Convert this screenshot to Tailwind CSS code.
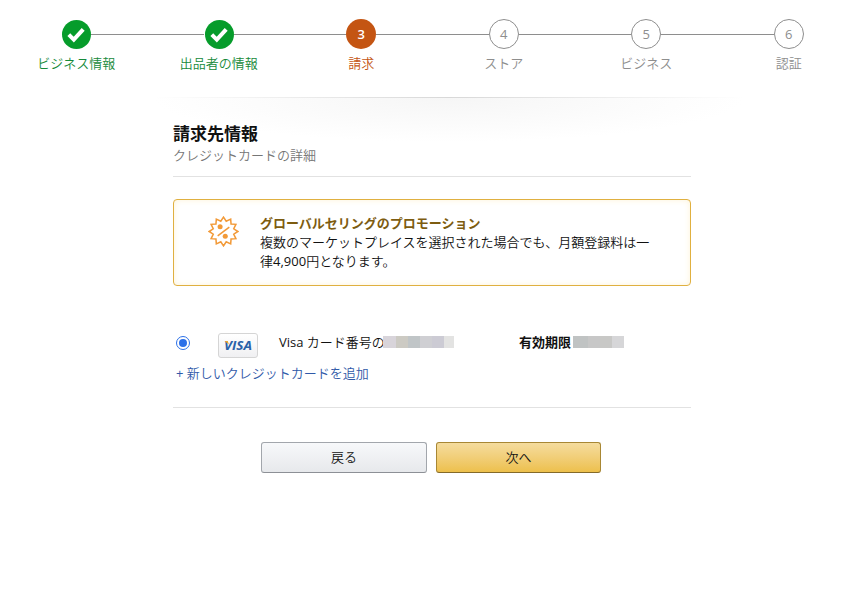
<!DOCTYPE html>
<html lang="ja">
<head>
  <meta charset="UTF-8">
  <meta name="viewport" content="width=device-width, initial-scale=1.0">
  <title>請求先情報</title>
  <script src="https://cdn.jsdelivr.net/npm/@tailwindcss/browser@4"></script>
  <style>
    body { font-family: "Open Sans", "Noto Sans CJK JP", sans-serif; }
  </style>
</head>
<body class="bg-white text-[#111] text-[13px] leading-[19px] font-[350] h-screen overflow-hidden">
  <!-- progress -->
  <ol class="grid grid-cols-6 w-[855px] ml-[5px] pt-[19px] h-[97px] text-center text-[#8e8e8e]">
    <li>
      <div class="flex items-center h-[30px]">
        <span class="flex-1"></span>
        <svg class="w-[29px] h-[29px]" viewBox="0 0 29 29"><circle cx="14.5" cy="14.5" r="14.5" fill="#069c2b"/><path d="M6.8 14.6l5 5L21.2 9.4" fill="none" stroke="#fff" stroke-width="4"/></svg>
        <span class="flex-1 h-px bg-[#8e8e8e]"></span>
      </div>
      <p class="mt-[5px] text-[#168a3a]">ビジネス情報</p>
    </li>
    <li>
      <div class="flex items-center h-[30px]">
        <span class="flex-1 h-px bg-[#8e8e8e]"></span>
        <svg class="w-[29px] h-[29px] ml-px" viewBox="0 0 29 29"><circle cx="14.5" cy="14.5" r="14.5" fill="#069c2b"/><path d="M6.8 14.6l5 5L21.2 9.4" fill="none" stroke="#fff" stroke-width="4"/></svg>
        <span class="flex-1 h-px bg-[#8e8e8e]"></span>
      </div>
      <p class="mt-[5px] text-[#168a3a]">出品者の情報</p>
    </li>
    <li>
      <div class="flex items-center h-[30px]">
        <span class="flex-1 h-px bg-[#8e8e8e]"></span>
        <span class="size-[30px] rounded-full bg-[#c45513] text-white font-semibold leading-[30px]">3</span>
        <span class="flex-1 h-px bg-[#8e8e8e]"></span>
      </div>
      <p class="mt-[5px] text-[#c45513]">請求</p>
    </li>
    <li>
      <div class="flex items-center h-[30px]">
        <span class="flex-1 h-px bg-[#8e8e8e]"></span>
        <span class="size-[30px] rounded-full border border-[#8e8e8e] leading-[29px] font-normal">4</span>
        <span class="flex-1 h-px bg-[#8e8e8e]"></span>
      </div>
      <p class="mt-[5px]">ストア</p>
    </li>
    <li>
      <div class="flex items-center h-[30px]">
        <span class="flex-1 h-px bg-[#8e8e8e]"></span>
        <span class="size-[30px] rounded-full border border-[#8e8e8e] leading-[29px] font-normal">5</span>
        <span class="flex-1 h-px bg-[#8e8e8e]"></span>
      </div>
      <p class="mt-[5px]">ビジネス</p>
    </li>
    <li>
      <div class="flex items-center h-[30px]">
        <span class="flex-1 h-px bg-[#8e8e8e]"></span>
        <span class="size-[30px] rounded-full border border-[#8e8e8e] leading-[29px] font-normal">6</span>
        <span class="flex-1"></span>
      </div>
      <p class="mt-[5px]">認証</p>
    </li>
  </ol>

  <div class="h-px w-[590px] ml-[154px] bg-linear-to-r from-white via-[#d8d8d8] to-white"></div>
  <main class="w-[590px] ml-[154px] px-[19px] pt-[25px] bg-[radial-gradient(295px_44px_at_50%_0,#f6f6f6,#fff)]">
    <h1 class="text-[17px] leading-[22px] font-bold">請求先情報</h1>
    <p class="text-[#767676] mt-px">クレジットカードの詳細</p>
    <hr class="w-[518px] mt-[11px] border-[#e2e2e2]">

    <section class="flex w-[518px] h-[87px] mt-[22px] pl-[34px] pt-[14px] rounded border border-[#e0b040] shadow-[inset_0_0_6px_#fdf3d8]">
      <svg class="w-[31px] h-[31px] mt-[2px] shrink-0" viewBox="0 0 32 32" fill="none" stroke="#f29a38" stroke-width="1.6">
        <path d="M16 1.2L18.8 5.4L23.4 3.2L23.8 8.2L28.8 8.6L26.6 13.2L30.8 16L26.6 18.8L28.8 23.4L23.8 23.8L23.4 28.8L18.8 26.6L16 30.8L13.2 26.6L8.6 28.8L8.2 23.8L3.2 23.4L5.4 18.8L1.2 16L5.4 13.2L3.2 8.6L8.2 8.2L8.6 3.2L13.2 5.4Z"/>
        <path d="M10 20.5L22 11.5"/>
        <circle cx="12.5" cy="11.2" r="2.6" fill="#f29a38" stroke="none"/>
        <circle cx="17.8" cy="21" r="2.6" fill="#f29a38" stroke="none"/>
      </svg>
      <div class="ml-[21px] w-[395px]">
        <h2 class="font-bold text-[#7d5c10]">グローバルセリングのプロモーション</h2>
        <p>複数のマーケットプレイスを選択された場合でも、月額登録料は一<br>律<span class="font-normal">4,900</span>円となります。</p>
      </div>
    </section>

    <div class="flex items-center w-[518px] h-[26px] mt-[46px]">
      <span class="size-[14px] ml-[3px] -mt-1 rounded-full border border-[#2b70e8] p-[2px] shrink-0"><span class="block size-full rounded-full bg-[#2b70e8]"></span></span>
      <span class="flex items-center justify-center w-10 h-[25px] ml-7 mt-px rounded-[3px] border border-[#d5d5d5] bg-linear-to-b from-white to-[#f0f0f2] text-[12px] font-bold italic">
        <svg class="w-[28px] h-[18px]" viewBox="0 0 28 18">
          <text x="0" y="13" textLength="28" lengthAdjust="spacingAndGlyphs" fill="#2a62a8">VISA</text>
          <path d="M0.5 4h3.2l1.3 3.6z" fill="#f0a526"/>
        </svg>
      </span>
      <span class="w-[104px] ml-[21px] -mt-[6px] whitespace-nowrap"><span class="font-normal">Visa</span> カード番号の</span>
      <span class="flex h-3 w-[71px] -mt-[6px]">
        <i class="w-[13px] bg-[#d8d4da]"></i><i class="w-3 bg-[#cccac3]"></i><i class="w-3 bg-[#c0c5c7]"></i><i class="w-3 bg-[#cfcfd3]"></i><i class="w-3 bg-[#cccbd4]"></i><i class="w-[10px] bg-[#e3e3e2]"></i>
      </span>
      <span class="w-[54px] ml-[65px] -mt-[6px] font-bold whitespace-nowrap">有効期限</span>
      <span class="flex h-3 w-[51px] -mt-[6px]">
        <i class="w-[15px] bg-[#c0c3c3]"></i><i class="w-3 bg-[#c7c7c7]"></i><i class="w-3 bg-[#c8c8c6]"></i><i class="w-3 bg-[#d6d6d8]"></i>
      </span>
    </div>
    <a href="#" class="block ml-[3px] mt-[6px] text-[#3059a8]"><span class="font-normal">+</span> 新しいクレジットカードを追加</a>
    <hr class="w-[518px] mt-[24px] border-[#e2e2e2]">

    <div class="flex gap-[9px] ml-[88px] mt-[34px]">
      <button class="w-[166px] h-[31px] rounded-[3px] border border-[#a2a6ac] border-b-[#8d9096] bg-linear-to-b from-[#f7f8fa] to-[#e7e9ec]">戻る</button>
      <button class="w-[165px] h-[31px] rounded-[3px] border border-[#a88734] border-b-[#846a29] bg-linear-to-b from-[#f5dc9d] to-[#edc04b]">次へ</button>
    </div>
  </main>
</body>
</html>
